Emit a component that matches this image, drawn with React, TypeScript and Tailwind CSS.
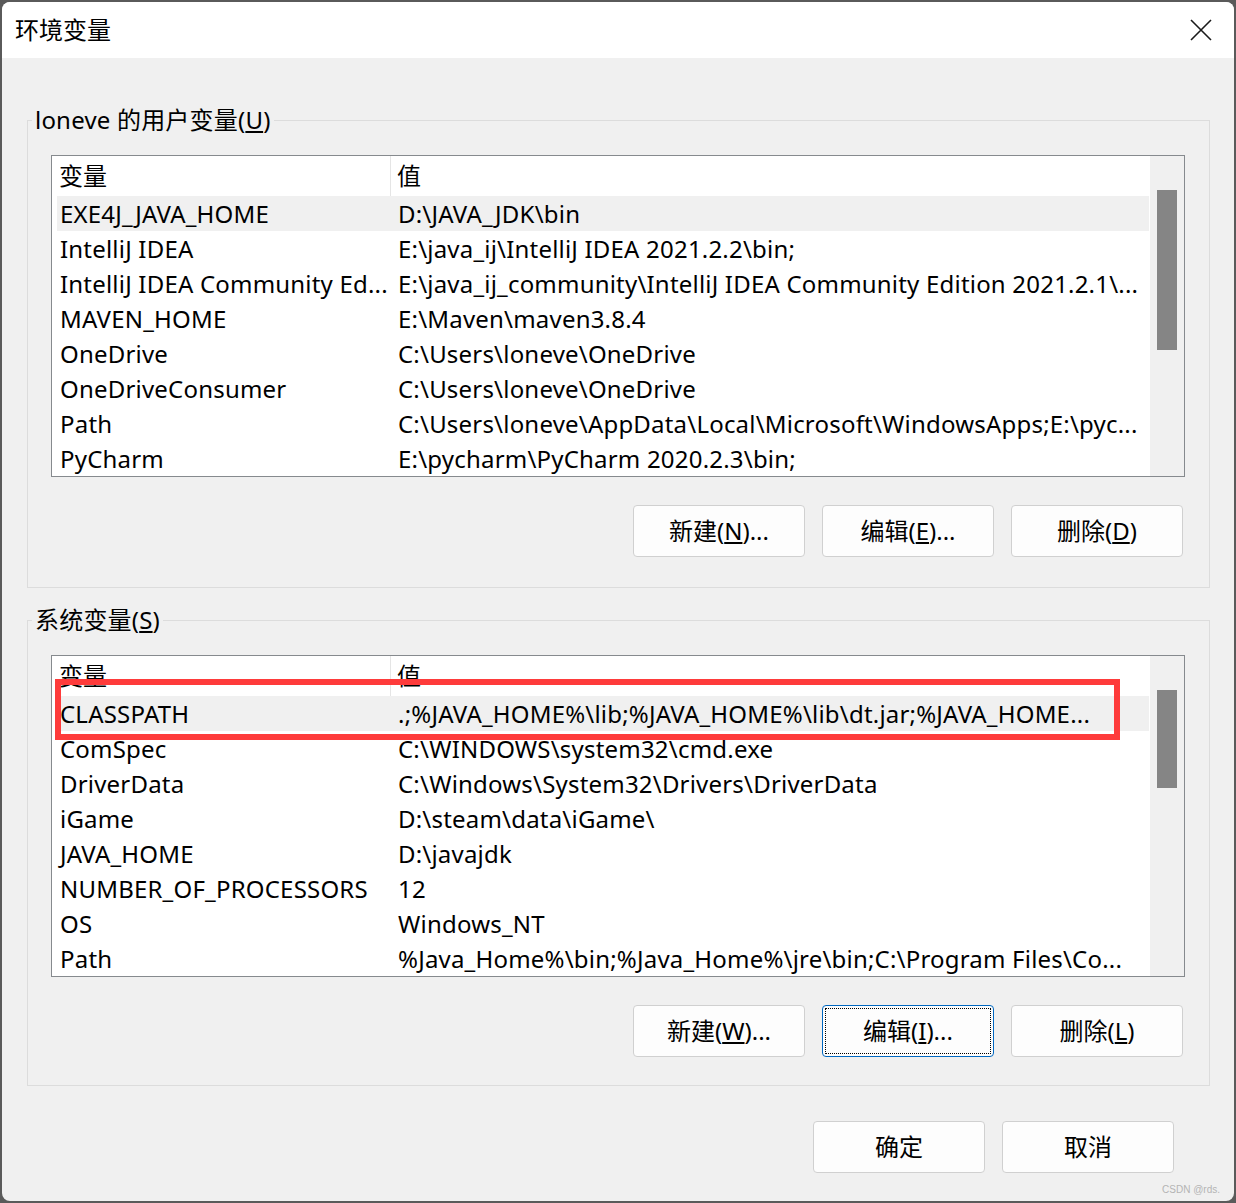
import React from 'react';

const FONT = { fontFamily: '"Noto Sans", "Noto Sans CJK SC", sans-serif' };

type Row = { name: string; value: string };

const userVars: Row[] = [
  { name: 'EXE4J_JAVA_HOME', value: 'D:\\JAVA_JDK\\bin' },
  { name: 'IntelliJ IDEA', value: 'E:\\java_ij\\IntelliJ IDEA 2021.2.2\\bin;' },
  { name: 'IntelliJ IDEA Community Ed...', value: 'E:\\java_ij_community\\IntelliJ IDEA Community Edition 2021.2.1\\...' },
  { name: 'MAVEN_HOME', value: 'E:\\Maven\\maven3.8.4' },
  { name: 'OneDrive', value: 'C:\\Users\\loneve\\OneDrive' },
  { name: 'OneDriveConsumer', value: 'C:\\Users\\loneve\\OneDrive' },
  { name: 'Path', value: 'C:\\Users\\loneve\\AppData\\Local\\Microsoft\\WindowsApps;E:\\pyc...' },
  { name: 'PyCharm', value: 'E:\\pycharm\\PyCharm 2020.2.3\\bin;' },
];

const systemVars: Row[] = [
  { name: 'CLASSPATH', value: '.;%JAVA_HOME%\\lib;%JAVA_HOME%\\lib\\dt.jar;%JAVA_HOME...' },
  { name: 'ComSpec', value: 'C:\\WINDOWS\\system32\\cmd.exe' },
  { name: 'DriverData', value: 'C:\\Windows\\System32\\Drivers\\DriverData' },
  { name: 'iGame', value: 'D:\\steam\\data\\iGame\\' },
  { name: 'JAVA_HOME', value: 'D:\\javajdk' },
  { name: 'NUMBER_OF_PROCESSORS', value: '12' },
  { name: 'OS', value: 'Windows_NT' },
  { name: 'Path', value: '%Java_Home%\\bin;%Java_Home%\\jre\\bin;C:\\Program Files\\Co...' },
];

function VarList({ rows, thumbHeight, marked }: { rows: Row[]; thumbHeight: string; marked?: boolean }) {
  return (
    <div className="relative flex w-[1134px] h-[322px] border border-[#868a8e] bg-white">
      <div className="w-[1097px] pl-[5px] overflow-hidden">
        <div className="flex h-[40px] items-center text-[24px] text-black">
          <div className="w-[334px] pl-[2px] h-full flex items-center border-r border-[#e5e5e5]">变量</div>
          <div className="pl-[6px]">值</div>
        </div>
        {rows.map((r, i) => (
          <div
            key={r.name}
            className={`flex h-[35px] items-center text-[24px] tracking-[0.2px] text-black whitespace-nowrap ${i === 0 ? 'bg-[#f0f0f0]' : ''}`}
          >
            <div className="w-[335px] pl-[3px] overflow-hidden">{r.name}</div>
            <div className="flex-1 pl-[6px] overflow-hidden">{r.value}</div>
          </div>
        ))}
      </div>
      <div className="w-[1px] bg-white" />
      <div className="w-[34px] bg-[#f0f0f0] pt-[34px] pl-[7px]">
        <div className={`w-[20px] ${thumbHeight} bg-[#858585]`} />
      </div>
      {marked && (
        <div className="absolute left-[3px] top-[23px] w-[1065px] h-[61px] border-[6px] border-[#fe3b3b]" />
      )}
    </div>
  );
}

function Btn({ children, focused }: { children: React.ReactNode; focused?: boolean }) {
  return (
    <button
      className={`w-[172px] h-[52px] rounded-[4px] bg-[#fdfdfd] text-[24px] text-black flex items-center justify-center ${
        focused ? 'border border-[#0067c0] p-[2px]' : 'border border-[#d0d0d0]'
      }`}
    >
      {focused ? (
        <span className="w-full h-full flex items-center justify-center border border-dotted border-black">{children}</span>
      ) : (
        children
      )}
    </button>
  );
}

function Group({ legend, children }: { legend: React.ReactNode; children: React.ReactNode }) {
  return (
    <fieldset className="ml-[25px] w-[1183px] border border-[#dcdcdc] pl-[23px] pt-[19px]">
      <legend className="-ml-[19px] px-[3px] text-[24px] leading-[32px] tracking-[0.2px] text-black">{legend}</legend>
      {children}
    </fieldset>
  );
}

export default function App() {
  return (
    <div className="w-[1236px] h-[1203px] bg-[#5a5a5a] p-[2px]" style={FONT}>
      <div className="relative h-full rounded-[8px] overflow-hidden bg-[#f0f0f0] flex flex-col">
        <div className="h-[56px] bg-white flex items-center justify-between pl-[13px] pr-[22px] shrink-0">
          <span className="text-[24px] text-black">环境变量</span>
          <svg width="22" height="22" viewBox="0 0 22 22" fill="none" stroke="#1a1a1a" strokeWidth="1.6">
            <path d="M1 1 L21 21 M21 1 L1 21" />
          </svg>
        </div>

        <div className="mt-[46px]">
          <Group
            legend={
              <>
                loneve 的用户变量(<span className="underline">U</span>)
              </>
            }
          >
            <VarList rows={userVars} thumbHeight="h-[160px]" />
            <div className="flex justify-end gap-[17px] w-[1132px] mt-[28px] mb-[30px]">
              <Btn>新建(<span className="underline">N</span>)...</Btn>
              <Btn>编辑(<span className="underline">E</span>)...</Btn>
              <Btn>删除(<span className="underline">D</span>)</Btn>
            </div>
          </Group>
        </div>

        <div className="mt-[16px]">
          <Group
            legend={
              <>
                系统变量(<span className="underline">S</span>)
              </>
            }
          >
            <VarList rows={systemVars} thumbHeight="h-[98px]" marked />
            <div className="flex justify-end gap-[17px] w-[1132px] mt-[28px] mb-[28px]">
              <Btn>新建(<span className="underline">W</span>)...</Btn>
              <Btn focused>编辑(<span className="underline">I</span>)...</Btn>
              <Btn>删除(<span className="underline">L</span>)</Btn>
            </div>
          </Group>
        </div>

        <div className="flex justify-end gap-[17px] w-[1172px] mt-[35px]">
          <Btn>确定</Btn>
          <Btn>取消</Btn>
        </div>

        <div
          className="absolute right-[14px] bottom-[4px] text-[10px] text-[#b4b4b4]"
          style={{ fontFamily: '"Liberation Sans", sans-serif' }}
        >
          CSDN @rds.
        </div>
      </div>
    </div>
  );
}
